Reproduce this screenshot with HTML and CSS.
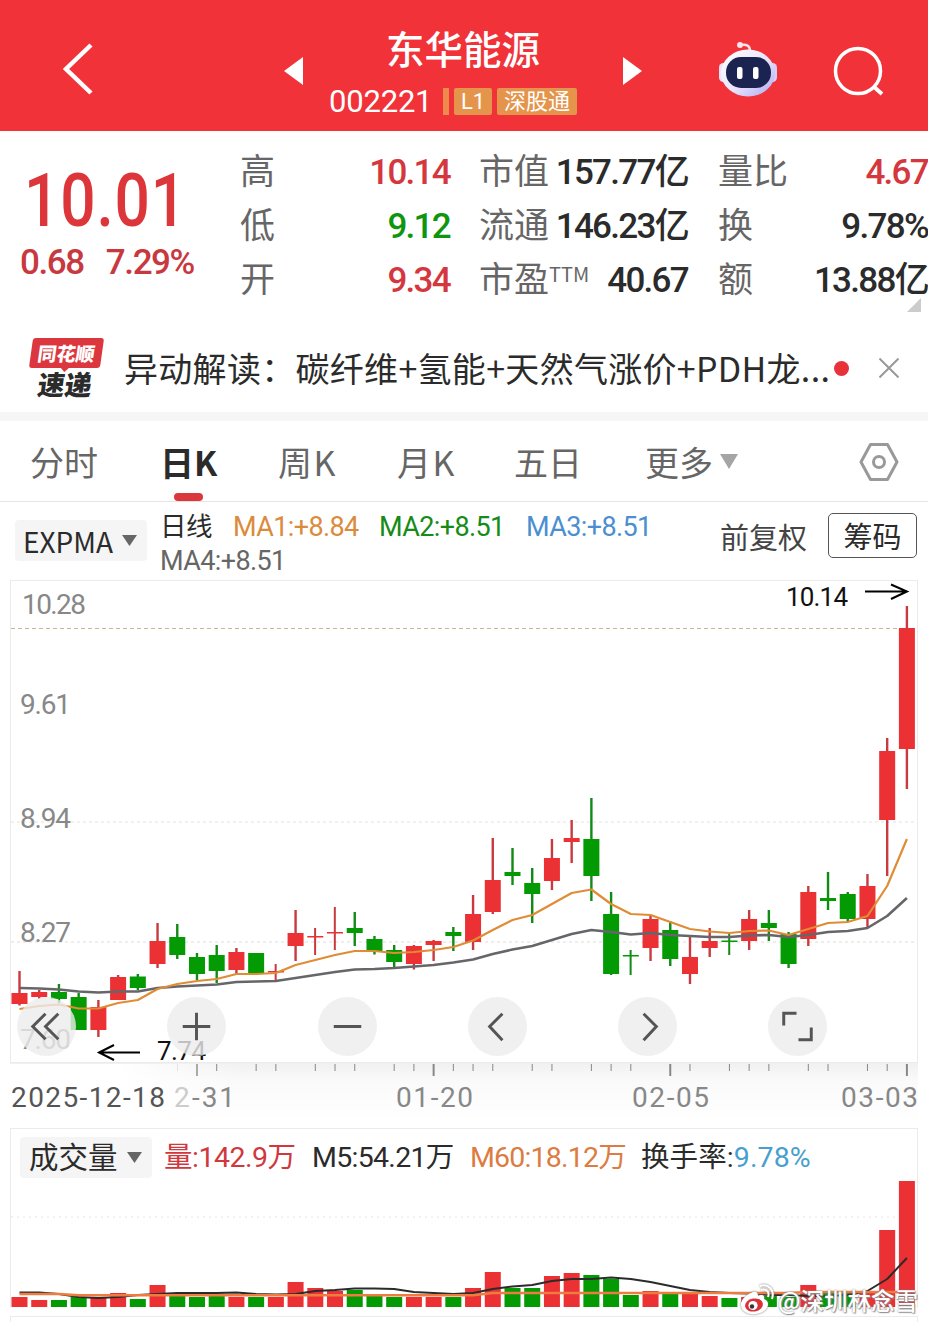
FILE: index.html
```html
<!DOCTYPE html>
<html lang="zh-CN">
<head>
    <meta charset="UTF-8">
    <meta name="viewport" content="width=device-width, initial-scale=1.0">
    <title>东华能源 002221</title>
    <link rel="stylesheet" href="styles.css">
</head>
<body>
    <header>
        <svg class="back" width="34" height="56" viewBox="0 0 34 56"><path d="M30 4L5 28L30 52" fill="none" stroke="#fff" stroke-width="4.5"/></svg>
        <svg class="prev" width="20" height="30" viewBox="0 0 20 30"><path d="M19 1V29L0 15z" fill="#fff"/></svg>
        <div class="stock">
            <h1>东华能源</h1>
            <div class="code">
                <span class="num">002221</span>
                <i class="bar"></i>
                <span class="tag">L1</span>
                <span class="tag wide">深股通</span>
            </div>
        </div>
        <svg class="next" width="20" height="30" viewBox="0 0 20 30"><path d="M0 1V29L19 15z" fill="#fff"/></svg>
        <svg class="robot" width="60" height="58" viewBox="0 0 60 58">
            <defs>
                <linearGradient id="shell" x1="0" y1="0" x2="1" y2="1">
                    <stop offset="0" stop-color="#fff"/>
                    <stop offset=".55" stop-color="#e9e4fb"/>
                    <stop offset="1" stop-color="#a9a3f3"/>
                </linearGradient>
            </defs>
            <path d="M23 5C29 4 32 6 32 11" fill="none" stroke="#ffe3ea" stroke-width="2.500"/>
            <circle cx="22" cy="5" r="3" fill="#ffe3ea"/>
            <rect x="1" y="23" width="9" height="19" rx="4.5" fill="#e7e1fa"/>
            <rect x="50" y="23" width="9" height="19" rx="4.5" fill="#d5cffa"/>
            <ellipse cx="30" cy="33" rx="27" ry="23.500" fill="url(#shell)"/>
            <rect x="8" y="17" width="45" height="31" rx="15" fill="#1b2350"/>
            <rect x="19" y="27" width="5.500" height="12" rx="2" fill="#fff"/>
            <rect x="35" y="27" width="5.500" height="12" rx="2" fill="#fff"/>
        </svg>
        <svg class="search" width="52" height="52" viewBox="0 0 52 52"><circle cx="25" cy="25" r="22.500" fill="none" stroke="#fff" stroke-width="3.500"/><path d="M40 40L49 48" stroke="#fff" stroke-width="4"/></svg>
    </header>

    <section class="quote">
        <div class="price">
            <div class="last"><span>10.01</span></div>
            <div class="change"><span>0.68</span><span>7.29%</span></div>
        </div>
        <dl class="col col1">
            <div><dt>高</dt><dd class="up">10.14</dd></div>
            <div><dt>低</dt><dd class="down">9.12</dd></div>
            <div><dt>开</dt><dd class="up">9.34</dd></div>
        </dl>
        <dl class="col col2">
            <div><dt>市值</dt><dd>157.77亿</dd></div>
            <div><dt>流通</dt><dd>146.23亿</dd></div>
            <div><dt>市盈<sup>TTM</sup></dt><dd>40.67</dd></div>
        </dl>
        <dl class="col col3">
            <div><dt>量比</dt><dd class="up">4.67</dd></div>
            <div><dt>换</dt><dd>9.78%</dd></div>
            <div><dt>额</dt><dd>13.88亿</dd></div>
        </dl>
        <i class="corner"></i>
    </section>

    <section class="news">
        <div class="logo">
            <span class="logo-top">同花顺</span>
            <span class="logo-bottom">速递</span>
        </div>
        <p>异动解读：碳纤维+氢能+天然气涨价+PDH龙...</p>
        <i class="dot"></i>
        <svg class="close" width="20" height="20" viewBox="0 0 20 20"><path d="M0.500 0.500L19.500 19.500M19.500 0.500L0.500 19.500" stroke="#999" stroke-width="2"/></svg>
    </section>

    <nav>
        <a>分时</a>
        <a class="active">日K</a>
        <a>周K</a>
        <a>月K</a>
        <a>五日</a>
        <a class="more">更多<svg width="18" height="15" viewBox="0 0 18 15"><path d="M0 0H18L9 15z" fill="#a5a5a5"/></svg></a>
        <svg class="settings" width="40" height="40" viewBox="0 0 40 40" fill="none" stroke="#999" stroke-width="3" stroke-linejoin="round"><path d="M11.500 2.500H28.500L38 20L28.500 37.500H11.500L2 20z"/><circle cx="20" cy="20" r="5.500"/></svg>
    </nav>

    <section class="indicator">
        <div class="select">EXPMA<svg width="15" height="11" viewBox="0 0 15 11"><path d="M0 0H15L7.500 11z" fill="#666"/></svg></div>
        <div class="ma">
            <span class="name">日线</span>
            <span class="ma1">MA1:+8.84</span>
            <span class="ma2">MA2:+8.51</span>
            <span class="ma3">MA3:+8.51</span>
            <span class="ma4">MA4:+8.51</span>
        </div>
        <span class="adjust">前复权</span>
        <button class="chips">筹码</button>
    </section>

    <section class="kline">
        <svg id="kline" width="928" height="548" viewBox="0 580 928 548"></svg>
        <div class="tools">
            <button><svg viewBox="0 0 60 60"><path d="M29 17L16 30L29 43M42 17L29 30L42 43"/></svg></button>
            <button><svg viewBox="0 0 60 60"><path d="M16 30H44M30 16V44"/></svg></button>
            <button><svg viewBox="0 0 60 60"><path d="M16 30H44"/></svg></button>
            <button><svg viewBox="0 0 60 60"><path d="M35 17L22 30L35 44"/></svg></button>
            <button><svg viewBox="0 0 60 60"><path d="M26 17L39 30L26 44"/></svg></button>
            <button><svg viewBox="0 0 60 60"><path d="M16 29V16.500H29M44 31V43.500H31"/></svg></button>
        </div>
    </section>

    <section class="volume">
        <div class="volume-head">
            <div class="select">成交量<svg width="15" height="11" viewBox="0 0 15 11"><path d="M0 0H15L7.500 11z" fill="#666"/></svg></div>
            <span class="v1">量:142.9万</span>
            <span class="v2">M5:54.21万</span>
            <span class="v3">M60:18.12万</span>
            <span class="v4">换手率:<b>9.78%</b></span>
        </div>
        <svg id="volume" width="928" height="142" viewBox="0 1180 928 142"></svg>
        <div class="watermark">
            <svg width="34" height="32" viewBox="0 0 34 32">
                <path d="M13 8C5 11 0 17 1 22C2 28 9 31 16 30C23 29 28 25 28 20C28 17 26 16 24 15C25 11 22 10 18 12C18 8 16 7 13 8z" fill="#fff"/>
                <ellipse cx="14" cy="21" rx="9" ry="6.500" fill="#d9303a" transform="rotate(-10 14 21)"/>
                <circle cx="13" cy="21.500" r="4.600" fill="#fff"/>
                <circle cx="12" cy="22.500" r="2.200" fill="#333"/>
                <path d="M21 6C26 4 30 8 28 13M20 2C28 -1 35 6 32 15" fill="none" stroke="#fff" stroke-width="2"/>
            </svg>
            <span>@深圳林念雪</span>
        </div>
    </section>

    <script>
        const RED = "#eb3134";
        const GREEN = "#049a04";

        // [high, body top, body bottom, low, up, volume top]
        const candles = [
            [971, 993, 1004, 1005.5, 1, 1297], [990, 992, 997, 999, 1, 1300], [984, 992, 999, 1003, 0, 1300],
            [993, 997, 1030, 1030, 0, 1297], [1000, 1007, 1030, 1037, 1, 1297], [975, 977, 1000, 1000, 1, 1293],
            [974, 976.5, 988, 990, 0, 1299], [923, 941, 964, 968, 1, 1285], [924, 937, 955, 959, 0, 1295],
            [953, 957, 974, 980, 0, 1297], [945, 955, 971, 983, 0, 1296], [948, 952, 970, 974, 1, 1297],
            [953, 953, 973, 973, 0, 1297], [964, 971, 972.5, 981, 1, 1297], [910, 933, 946, 961, 1, 1282],
            [928, 936, 937, 955, 1, 1288], [907, 932, 933, 950, 1, 1291], [912, 928, 933, 946, 0, 1290],
            [936, 939, 951, 954.5, 0, 1296], [945, 950, 962, 967, 0, 1297], [945, 946, 964, 969.5, 1, 1297],
            [940, 941, 945, 961, 1, 1297], [927, 932, 936, 951, 0, 1297], [895, 914, 942, 950, 1, 1288],
            [838, 880, 912, 914, 1, 1272], [848, 872, 876, 885, 0, 1288], [868, 883, 894, 923, 0, 1288],
            [839, 858, 881, 890, 1, 1276], [820, 838, 842, 863, 1, 1273], [798, 839, 876, 901, 0, 1275],
            [892, 914, 974, 975, 0, 1279], [950, 955, 956.5, 975, 0, 1295], [915, 919, 948, 961, 1, 1291],
            [921, 930, 959, 966, 0, 1293], [936, 957, 974, 984, 1, 1294], [928, 941, 948, 957, 1, 1296],
            [933, 940.5, 942, 955, 0, 1298], [910, 919, 941, 950, 1, 1297], [910, 923, 928, 941, 0, 1296],
            [932, 934, 964, 968, 0, 1297], [886, 892, 939, 946, 1, 1285], [872, 898, 901, 910, 0, 1292],
            [892, 894, 919, 922, 0, 1292], [874, 886, 919, 928, 1, 1291], [738, 751, 820, 876, 1, 1230],
            [606, 628, 749, 789, 1, 1181]
        ];
        const maFast = [1009, 1006, 1004.5, 1008.5, 1008.5, 1003, 1000, 989, 984, 981, 979, 974, 974, 973, 965, 960, 955, 951, 951, 953, 952, 950, 947, 940.5, 930, 920, 915, 904, 893, 889.5, 904, 914, 915, 922, 929, 931.5, 933, 931, 930.5, 935, 929, 923, 922, 916, 886, 839];
        const maSlow = [988, 988.5, 989.5, 991.5, 992.5, 991.5, 991.5, 988, 986.5, 985.5, 984.5, 982, 981.5, 981, 978, 975, 972, 969.5, 969, 968, 966.5, 965, 962.5, 959.5, 954, 949.5, 946, 940, 934, 930, 932, 934.5, 933, 935, 936, 937, 937, 935.5, 935, 937, 935, 932, 931, 928, 916, 898];
        const vol5 = [1292.5, 1292.5, 1294, 1297, 1298, 1297, 1295, 1294, 1293, 1293, 1293, 1292.5, 1294, 1294.5, 1294, 1291, 1290, 1288.5, 1288.5, 1289, 1292, 1293, 1294, 1293, 1289, 1286.5, 1285, 1281, 1279, 1279, 1277.5, 1279, 1282, 1286, 1290, 1292, 1293, 1293.5, 1295, 1295, 1296, 1296, 1295, 1291, 1279, 1258];
        const vol60 = candles.map((c, i) => i < 3 ? 1294 : i < 24 ? 1295.2 : i < 40 ? 1293 : 1292);

        // days with no tick on the date axis
        const noTick = [11, 14, 18, 25, 28, 32, 35, 39, 42];

        const px = i => 19.5 + i * 19.72;
        const rect = (x, y, w, h, c) => `<rect x="${x}" y="${y}" width="${w}" height="${h}" fill="${c}"/>`;
        const line = (x1, y1, x2, y2, c, w, dash) => `<path d="M${x1} ${y1}L${x2} ${y2}" stroke="${c}" stroke-width="${w}" stroke-dasharray="${dash || "none"}"/>`;
        const poly = (data, c, w) => `<polyline points="${data.map((y, i) => px(i) + "," + y).join(" ")}" fill="none" stroke="${c}" stroke-width="${w}" stroke-linejoin="round"/>`;
        const text = (str, x, y, len, c, size) => `<text x="${x}" y="${y}" textLength="${len}" fill="${c}" font-size="${size}">${str}</text>`;

        function drawKline() {
            let s = `<defs><linearGradient id="fade" x1="0" y1="0" x2="0" y2="1"><stop offset="0" stop-color="#f1f1f1"/><stop offset=".3" stop-color="#fafafa"/><stop offset="1" stop-color="#fff"/></linearGradient>
                <linearGradient id="left" x1="0" x2="1"><stop offset="0" stop-color="#fff"/><stop offset=".5" stop-color="#fff"/><stop offset="1" stop-color="#fff" stop-opacity="0"/></linearGradient></defs>`;
            s += rect(10, 1063, 908, 60, "url(#fade)") + rect(0, 1064, 240, 62, "url(#left)");
            s += `<rect x="10.5" y="580.5" width="907" height="482" fill="none" stroke="#ebebeb"/>`;
            s += line(11, 628.5, 899, 628.5, "#cbb68f", 1, "4 3");
            s += line(11, 822, 917, 822, "#e2e2e2", 1, "3 3") + line(11, 942, 917, 942, "#dcdcdc", 1, "3 3");
            s += text("10.28", 22, 614, 64, "#888", 28) + text("9.61", 20, 714, 51, "#888", 28);
            s += text("8.94", 20, 828, 51, "#888", 28) + text("8.27", 20, 942, 51, "#888", 28);
            s += text("7.60", 20, 1049, 51, "#888", 28);
            candles.forEach(([hi, top, bot, lo, up], i) => {
                const c = up ? RED : GREEN;
                const thin = bot - top < 2;
                s += rect(px(i) - 1.2, hi, thin ? 2 : 2.4, lo - hi, up ? "#c93a40" : "#128a16");
                s += rect(px(i) - 8, top, 16, Math.max(bot - top, 1.5), c);
            });
            s += poly(maSlow, "#66666a", 2.6) + poly(maFast, "#e08c35", 2.2);
            s += text("10.14", 786, 606, 62, "#111", 26) + text("7.74", 157, 1060, 49, "#111", 26);
            s += `<path d="M865 591.5H906M891 584.500L907 591.500L891 599M140 1052.500H100M114 1045L99 1052.500L114 1060" fill="none" stroke="#000" stroke-width="2"/>`;
            candles.forEach((c, i) => {
                const major = [9, 21, 33, 45].includes(i);
                if (major) s += rect(px(i) - 1, 1064, 2, 12, i === 9 ? "#aaa" : "#888");
                else if (i > 9 && !noTick.includes(i)) s += rect(px(i) - .5, 1064, 1, 7, "#888");
            });
            s += rect(177, 1064, 1, 7, "#e4e4e4");
            s += text("2025-12-18", 11, 1107, 154, "#555", 28);
            s += text("2", 174, 1107, 15, "#ccc", 28) + text("-31", 192, 1107, 43, "#888", 28);
            s += text("01-20", 396, 1107, 77, "#888", 28) + text("02-05", 632, 1107, 77, "#888", 28) + text("03-03", 841, 1107, 77, "#888", 28);
            document.getElementById("kline").innerHTML = s;
        }

        function drawVolume() {
            let s = line(11, 1217, 917, 1217, "#e4e4e4", 1, "2 4");
            candles.forEach((c, i) => {
                s += rect(px(i) - 8, c[5], 16, 1307 - c[5], c[4] ? RED : GREEN);
            });
            s += poly(vol5, "#2b2b2b", 2) + poly(vol60, "#ee7c40", 2.4);
            s += line(10, 1316.5, 918, 1316.5, "#ebebeb", 1);
            s += line(10.5, 1180, 10.5, 1308, "#ebebeb", 1) + line(917.5, 1180, 917.5, 1308, "#ebebeb", 1);
            s += line(10.5, 1316, 10.5, 1322, "#ebebeb", 1) + line(917.5, 1316, 917.5, 1322, "#ebebeb", 1);
            document.getElementById("volume").innerHTML = s;
        }

        drawKline();
        drawVolume();
    </script>
</body>
</html>
```

FILE: styles.css
```css
* {
    box-sizing: border-box;
}

body {
    margin: 0;
    width: 928px;
    height: 1322px;
    overflow: hidden;
    background: #fff;
    color: #2b2b2b;
    font-family: "Noto Sans CJK SC", sans-serif;
}

h1, p, dl, dd {
    margin: 0;
}

svg {
    display: block;
    flex: none;
}

button {
    padding: 0;
    border: 0;
    font-family: inherit;
}

header {
    display: flex;
    height: 131px;
    background: #f13239;
    color: #fff;
}

.back {
    margin: 41px 0 0 61px;
}

.prev {
    margin: 56px 0 0 189px;
}

.stock {
    width: 252px;
    margin: 22px 0 0 25px;
}

.stock h1 {
    margin-left: 57px;
    font-size: 38.5px;
    font-weight: 500;
    line-height: 50px;
    white-space: nowrap;
}

.code {
    display: flex;
    align-items: center;
    height: 28px;
    margin-top: 15px;
    font-family: Roboto, "Noto Sans CJK SC", sans-serif;
}

.num {
    width: 114px;
    font-size: 31px;
    letter-spacing: -0.2px;
}

.bar {
    width: 6px;
    height: 27px;
    margin-right: 5px;
    background: #f08a4c;
}

.tag {
    width: 38px;
    height: 27px;
    margin-right: 5px;
    border-radius: 2px;
    background: #e5944c;
    font-size: 22px;
    line-height: 28px;
    text-align: center;
}

.tag.wide {
    width: 80px;
    margin-right: 0;
    white-space: nowrap;
}

.next {
    margin: 56px 0 0 42px;
}

.robot {
    margin: 40px 0 0 75px;
}

.search {
    margin: 46px 0 0 55px;
}

.quote {
    position: relative;
    display: flex;
    height: 197px;
    padding-top: 14px;
    font-family: Roboto, "Noto Sans CJK SC", sans-serif;
}

.price {
    width: 240px;
    color: #dc363b;
}

.last {
    height: 80px;
    margin: 15px 0 0 24px;
    font-size: 75px;
    font-weight: 500;
    line-height: 80px;
}

.last span {
    display: inline-block;
    transform: scaleX(0.83);
    transform-origin: left;
    letter-spacing: 1px;
}

.change {
    display: flex;
    gap: 22px;
    margin: 2px 0 0 20px;
    color: #c8393f;
    font-size: 35px;
    font-weight: 500;
    letter-spacing: -1.4px;
    line-height: 42px;
}

.col div {
    display: flex;
    justify-content: space-between;
    height: 54px;
    line-height: 54px;
    white-space: nowrap;
}

.col1 {
    width: 210px;
}

.col2 {
    width: 209px;
    margin-left: 29px;
}

.col3 {
    width: 210px;
    margin-left: 30px;
}

dt {
    padding-top: 1px;
    color: #666;
    font-size: 35px;
}

dt sup {
    font-size: 20px;
    line-height: 0;
    vertical-align: 10px;
    font-family: "Noto Sans CJK SC", sans-serif;
}

dd {
    padding-top: 1px;
    font-size: 35px;
    font-weight: 500;
    letter-spacing: -1.7px;
}

.up {
    color: #d4373d;
}

.down {
    color: #0e960e;
}

.corner {
    position: absolute;
    right: 7px;
    bottom: 16px;
    border-left: 14px solid transparent;
    border-bottom: 14px solid #ccc;
}

.news {
    display: flex;
    align-items: center;
    height: 84px;
    padding: 0 0 4px 30px;
}

.logo {
    width: 94px;
    height: 60px;
    font-weight: 900;
}

.logo span {
    display: block;
    transform: skewX(-8deg);
    white-space: nowrap;
}

.logo-top {
    position: relative;
    width: 71px;
    height: 30px;
    margin-left: 1px;
    border-radius: 3px;
    background: #dc373e;
    color: #fff;
    font-size: 19px;
    line-height: 29px;
    text-align: center;
}

.logo-top::after {
    content: "";
    position: absolute;
    top: 29px;
    left: 31px;
    border: 5px solid transparent;
    border-top-color: #dc373e;
    border-bottom: 0;
}

.logo-bottom {
    margin-left: 8px;
    color: #2b2b2b;
    font-size: 27px;
    line-height: 32px;
}

.news p {
    width: 710px;
    font-size: 34px;
    letter-spacing: 0.3px;
    line-height: 50px;
    white-space: nowrap;
}

.dot {
    width: 15px;
    height: 15px;
    border-radius: 50%;
    background: #e8323a;
}

.close {
    margin-left: 30px;
}

nav {
    display: flex;
    height: 90px;
    border-top: 9px solid #f6f6f6;
    border-bottom: 1px solid #e4e4e4;
    padding-left: 30px;
    color: #666;
    font-size: 34px;
    line-height: 81px;
}

nav a {
    position: relative;
    flex: none;
    width: 119px;
}

nav a:first-child {
    width: 130px;
}

nav a.active {
    width: 118px;
    color: #2b2b2b;
    font-weight: 700;
}

nav a.active::after {
    content: "";
    position: absolute;
    left: 14px;
    bottom: 0;
    width: 29px;
    height: 8px;
    border-radius: 4px;
    background: #dc373b;
}

nav a:nth-child(3),
nav a:nth-child(4) {
    letter-spacing: 1.5px;
}

nav a:nth-child(4) {
    width: 117px;
}

nav a:nth-child(5) {
    width: 131px;
}

nav a.more {
    display: flex;
    align-items: center;
    gap: 7px;
    width: 214px;
}

.settings {
    margin-top: 21px;
}

.indicator {
    display: flex;
    height: 78px;
    padding-left: 15px;
}

.select {
    display: flex;
    align-items: center;
    gap: 9px;
    flex: none;
    width: 132px;
    height: 41px;
    padding-left: 8px;
    border-radius: 4px;
    background: #f5f5f5;
    font-size: 28px;
}

.indicator .select {
    margin-top: 18px;
}

.ma {
    display: flex;
    flex-wrap: wrap;
    align-content: flex-start;
    width: 561px;
    padding: 8px 0 0 13px;
    font-family: Roboto, "Noto Sans CJK SC", sans-serif;
    font-size: 27px;
    letter-spacing: -0.6px;
    line-height: 34px;
}

.ma .name {
    width: 73px;
    font-size: 26.5px;
}

.ma1 {
    width: 146px;
    color: #db8b3c;
}

.ma2 {
    width: 147px;
    color: #148c17;
}

.ma3 {
    width: 160px;
    color: #4b8fd0;
}

.ma4 {
    color: #666;
}

.adjust {
    width: 108px;
    margin-left: 12px;
    color: #444;
    font-size: 29px;
    line-height: 69px;
}

.chips {
    width: 89px;
    height: 45px;
    margin-top: 11px;
    border: 1px solid #555;
    border-radius: 5px;
    background: #fff;
    color: #2b2b2b;
    font-size: 29px;
    line-height: 41px;
}

.kline {
    position: relative;
    height: 548px;
}

.kline text {
    font-family: Roboto, sans-serif;
}

.tools {
    position: absolute;
    top: 417px;
    left: 17px;
    display: flex;
    gap: 91.3px;
}

.tools button {
    width: 59px;
    height: 59px;
    border-radius: 50%;
    background: rgba(236, 236, 236, 0.8);
}

.tools path {
    fill: none;
    stroke: #555;
    stroke-width: 3;
}

.volume {
    position: relative;
    height: 194px;
}

.volume-head {
    display: flex;
    height: 52px;
    margin: 0 10px;
    padding: 8px 0 0 9px;
    border: 1px solid #ebebeb;
    border-bottom: 0;
    font-family: Roboto, "Noto Sans CJK SC", sans-serif;
    font-size: 28.5px;
    letter-spacing: -0.7px;
    line-height: 42px;
    white-space: nowrap;
}

.volume-head .select {
    width: 132px;
    padding-left: 9px;
    font-size: 29.5px;
    letter-spacing: 0;
}

.v1 {
    width: 148px;
    margin-left: 12px;
    color: #d0383d;
    letter-spacing: -0.5px;
}

.v2 {
    width: 158px;
}

.v3 {
    width: 171px;
    color: #dc7c42;
    letter-spacing: -0.8px;
}

.v4 {
    letter-spacing: 0.1px;
}

.v4 b {
    color: #479fd0;
    font-weight: 400;
}

.watermark {
    position: absolute;
    right: 10px;
    bottom: 6px;
    display: flex;
    align-items: center;
    gap: 4px;
    color: #fff;
    font-size: 23.5px;
    font-weight: 500;
    line-height: 32px;
    text-shadow: 0 0 2px #777, 1px 1px 1px #999;
}

.watermark svg {
    overflow: visible;
    filter: drop-shadow(0 0 1px #777);
}
```
